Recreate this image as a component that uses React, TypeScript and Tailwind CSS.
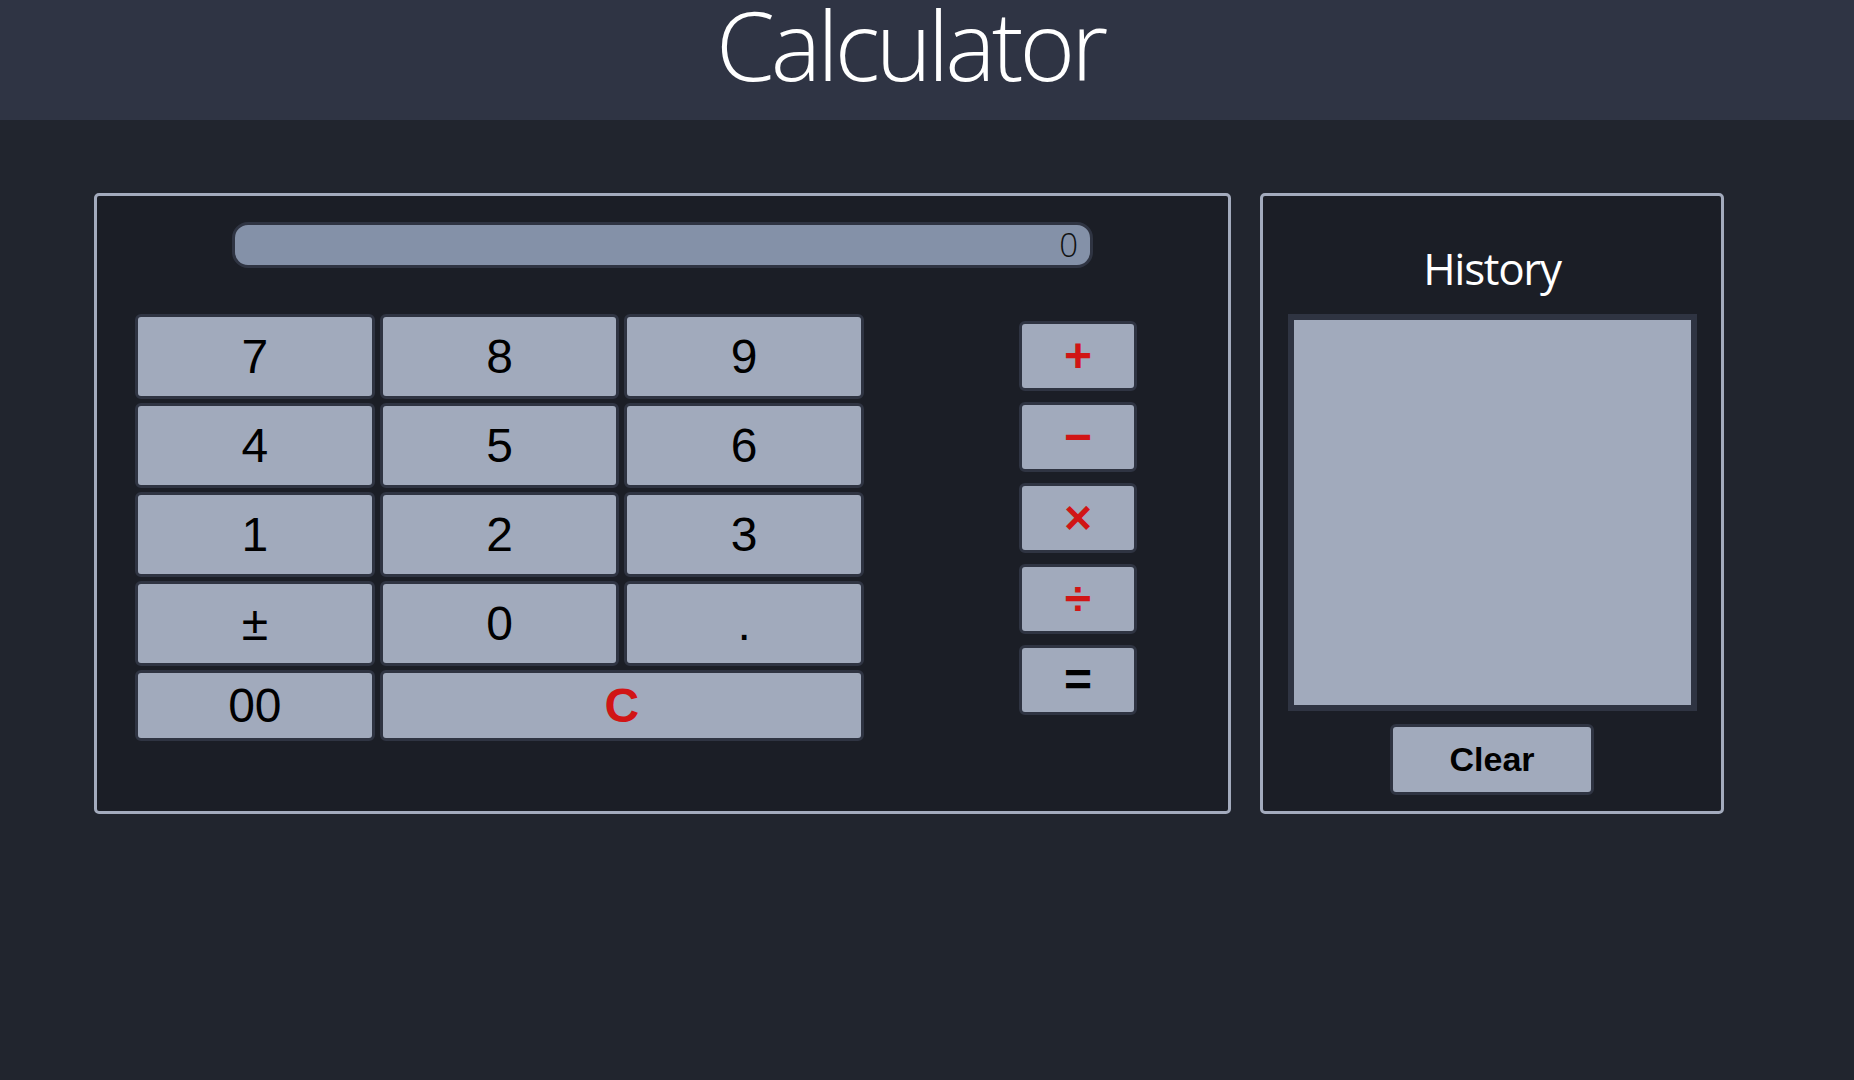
import React, { useState } from 'react';

const keys: { label: string; red?: boolean; bold?: boolean; wide?: boolean; short?: boolean }[] = [
  { label: '7' }, { label: '8' }, { label: '9' },
  { label: '4' }, { label: '5' }, { label: '6' },
  { label: '1' }, { label: '2' }, { label: '3' },
  { label: '±' }, { label: '0' }, { label: '.' },
  { label: '00', short: true }, { label: 'C', red: true, bold: true, wide: true, short: true },
];

const ops: { label: string; red: boolean }[] = [
  { label: '+', red: true },
  { label: '−', red: true },
  { label: '×', red: true },
  { label: '÷', red: true },
  { label: '=', red: false },
];

const App: React.FC = () => {
  const [display] = useState('0');

  return (
    <div className="min-h-[1080px] bg-[#21252e] font-['Liberation_Sans',Arial,sans-serif]">
      {/* 标题栏 */}
      <header className="h-[120px] bg-[#2f3444] flex justify-center items-start pr-[34px]">
        <h1 className="font-['Open_Sans',Roboto,sans-serif] font-light tracking-[-4px] text-[95px] leading-[88px] text-white">
          Calculator
        </h1>
      </header>

      <div className="flex gap-[29px] pl-[94px] pt-[73px]">
        {/* 计算器主体 */}
        <div className="w-[1137px] h-[621px] border-[3px] border-[#a3abbd] rounded-[5px] bg-[#1b1e26] flex flex-col items-center">
          <div className="mt-[26px] w-[861px] h-[46px] rounded-[16px] border-[3px] border-[#2f3442] bg-[#8491a8] flex items-center justify-end pr-[12px]">
            <span className="font-['Open_Sans',sans-serif] font-light text-[33px] text-[#111]">{display}</span>
          </div>

          <div className="flex self-start ml-[38px] mt-[46px]">
            <div className="grid grid-cols-3 gap-x-[5px] gap-y-[4px] w-[729px]">
              {keys.map((k) => (
                <button
                  key={k.label}
                  className={`${k.short ? 'h-[71px]' : 'h-[85px]'} ${k.wide ? 'col-span-2' : ''} ${k.red ? 'text-[#d11515]' : 'text-black'} ${k.bold ? 'font-bold' : ''} rounded-[6px] border-[3px] border-[#2f3442] bg-[#a1aabc] text-[48px] leading-none flex items-center justify-center`}
                >
                  {k.label}
                </button>
              ))}
            </div>

            <div className="ml-[155px] mt-[7px] flex flex-col gap-[11px]">
              {ops.map((o) => (
                <button
                  key={o.label}
                  className={`w-[118px] h-[70px] rounded-[6px] border-[3px] border-[#2f3442] bg-[#a1aabc] text-[48px] font-bold leading-none flex items-center justify-center ${o.red ? 'text-[#d11515]' : 'text-black'}`}
                >
                  {o.label}
                </button>
              ))}
            </div>
          </div>
        </div>

        {/* 历史记录 */}
        <div className="w-[464px] h-[621px] border-[3px] border-[#a3abbd] rounded-[5px] bg-[#1b1e26] flex flex-col items-center">
          <h2 className="mt-[42px] font-['Open_Sans',sans-serif] tracking-[-1.3px] text-[44px] leading-[60px] text-white">History</h2>
          <div className="mt-[16px] w-[409px] h-[397px] border-[6px] border-[#2f3442] bg-[#a1aabc]" />
          <button className="mt-[13px] w-[204px] h-[71px] rounded-[6px] border-[3px] border-[#2f3442] bg-[#a1aabc] text-[34px] font-bold text-black">
            Clear
          </button>
        </div>
      </div>
    </div>
  );
};

export default App;
